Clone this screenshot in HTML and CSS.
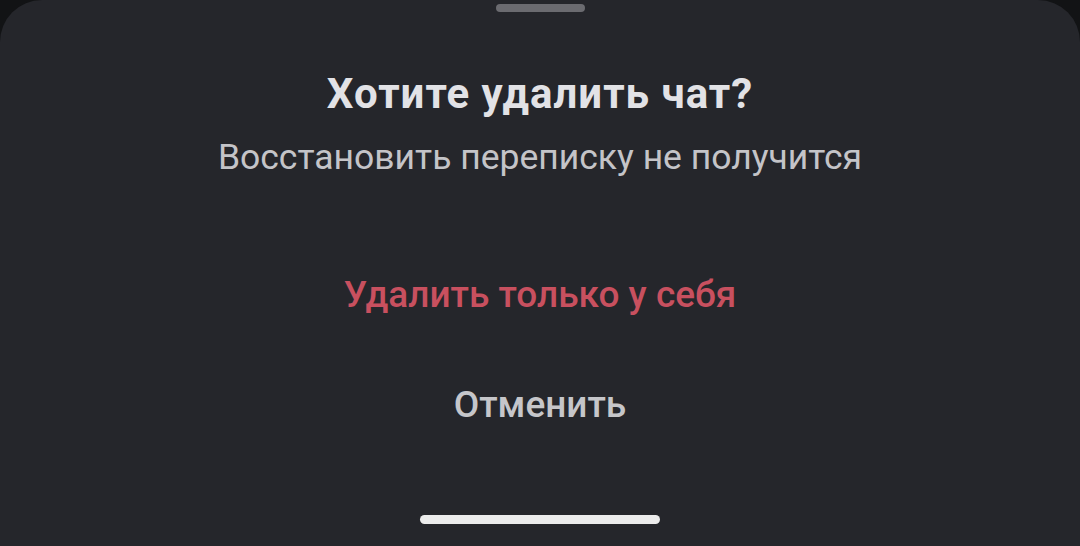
FILE: index.html
```html
<!DOCTYPE html>
<html lang="ru">
<head>
<meta charset="utf-8">
<link rel="stylesheet" href="styles.css">
</head>
<body>
<div class="sheet">
  <div class="handle"></div>
  <h1 class="title">Хотите удалить чат?</h1>
  <p class="subtitle">Восстановить переписку не получится</p>
  <div class="actions">
    <button class="action danger">Удалить только у себя</button>
    <button class="action cancel">Отменить</button>
  </div>
  <div class="home"></div>
</div>
</body>
</html>
```
FILE: styles.css
```css
html, body {
  margin: 0;
  padding: 0;
  background: #121315;
  width: 1080px;
  height: 546px;
  overflow: hidden;
}
.sheet {
  width: 1080px;
  height: 546px;
  background: #25262b;
  border-radius: 42px 42px 0 0;
  display: flex;
  flex-direction: column;
  align-items: center;
  font-family: Roboto, "Noto Sans", sans-serif;
  box-sizing: border-box;
}
.handle {
  width: 89px;
  height: 8px;
  margin-top: 4px;
  border-radius: 4px;
  background: #6b6b70;
}
.title {
  margin: 57px 0 0;
  font-size: 42px;
  line-height: 50px;
  letter-spacing: 1px;
  font-weight: 700;
  color: #e2e2e6;
}
.subtitle {
  margin: 17px 0 0;
  font-size: 35.5px;
  line-height: 42px;
  font-weight: 400;
  color: #c4c4c8;
}
.actions {
  display: flex;
  flex-direction: column;
  align-items: center;
  gap: 66px;
  margin-top: 95px;
}
.action {
  background: none;
  border: 0;
  padding: 0;
  font-family: inherit;
  font-size: 37px;
  line-height: 44px;
  font-weight: 500;
}
.danger { color: #c8505f; }
.cancel { color: #c6c6ca; }
.home {
  width: 240px;
  height: 9px;
  border-radius: 5px;
  background: #ececec;
  margin-top: auto;
  margin-bottom: 22px;
}
```
